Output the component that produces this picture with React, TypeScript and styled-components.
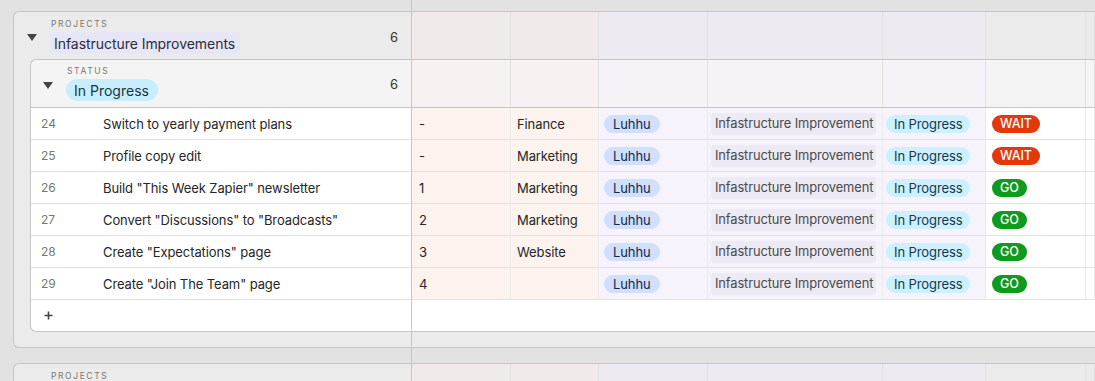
import React from "react";
import styled, { createGlobalStyle, css } from "styled-components";

const BORDER = "#c6c6c6";

const Global = createGlobalStyle`
  html, body { margin: 0; padding: 0; background: #e2e2e2; overflow: hidden; }
  body { font-family: Inter, "Noto Sans", sans-serif; color: #222; }
  * { box-sizing: border-box; }
`;

type Tint = "peach" | "lavender" | "none";
type Level = "outer" | "inner" | "row";

const TINTS: Record<Tint, Record<Level, string>> = {
  peach: { outer: "#f0ebea", inner: "#f7f2f1", row: "#fdf3ee" },
  lavender: { outer: "#edebf1", inner: "#f5f3f8", row: "#f7f3fd" },
  none: { outer: "#ebebeb", inner: "#f4f4f4", row: "#ffffff" },
};

const BASE: Record<"outer" | "inner", string> = { outer: "#ebebeb", inner: "#f4f4f4" };

const COLUMNS: { width: string; tint: Tint }[] = [
  { width: "99px", tint: "peach" },
  { width: "88px", tint: "peach" },
  { width: "109px", tint: "lavender" },
  { width: "175px", tint: "lavender" },
  { width: "103px", tint: "lavender" },
  { width: "100px", tint: "none" },
  { width: "1fr", tint: "none" },
];
const GRID = COLUMNS.map((c) => c.width).join(" ");

const rows = [
  { id: 24, title: "Switch to yearly payment plans", n: "-", team: "Finance", go: false },
  { id: 25, title: "Profile copy edit", n: "-", team: "Marketing", go: false },
  { id: 26, title: 'Build "This Week Zapier" newsletter', n: "1", team: "Marketing", go: true },
  { id: 27, title: 'Convert "Discussions" to "Broadcasts"', n: "2", team: "Marketing", go: true },
  { id: 28, title: 'Create "Expectations" page', n: "3", team: "Website", go: true },
  { id: 29, title: 'Create "Join The Team" page', n: "4", team: "", go: true },
];

/* ---------- layout ---------- */

const Screen = styled.div`
  display: flex;
  width: 1095px;
  height: 381px;
  overflow: hidden;
`;

const Pane = styled.div<{ $left?: boolean }>`
  display: flex;
  flex-direction: column;
  gap: 15px;
  padding-top: 11px;
  ${(p) =>
    p.$left
      ? css`
          width: 412px;
          flex-shrink: 0;
          border-right: 1px solid ${BORDER};
        `
      : css`
          flex: 1;
          min-width: 0;
        `}
`;

const Group = styled.section<{ $left?: boolean; $level: "outer" | "inner" }>`
  flex-shrink: 0;
  background: ${(p) => BASE[p.$level]};
  border-top: 1px solid ${BORDER};
  border-bottom: 1px solid ${BORDER};
  padding-bottom: ${(p) => (p.$level === "outer" ? "15px" : "0")};
  ${(p) =>
    p.$left &&
    css`
      margin-left: ${p.$level === "outer" ? "13px" : "16px"};
      border-left: 1px solid ${BORDER};
      border-radius: 6px 0 0 6px;
    `}
`;

const GroupHeader = styled.div<{ $level: "outer" | "inner" }>`
  display: flex;
  align-items: flex-start;
  padding-left: ${(p) => (p.$level === "outer" ? "13px" : "12px")};
  padding-right: 13px;
  border-bottom: ${(p) => (p.$level === "inner" ? `1px solid ${BORDER}` : "none")};
  height: ${(p) => (p.$level === "inner" ? "48px" : "47px")};
`;

const Toggle = styled.svg<{ $top: number }>`
  width: 10px;
  height: 7px;
  margin-top: ${(p) => p.$top}px;
  flex-shrink: 0;
`;

const LabelStack = styled.div<{ $top: number }>`
  display: flex;
  flex-direction: column;
  align-items: flex-start;
  margin-left: 13px;
  padding-top: ${(p) => p.$top}px;
  flex: 1;
`;

const FieldLabel = styled.div`
  font-size: 8.5px;
  line-height: 11px;
  letter-spacing: 1.6px;
  color: #777;
  padding-left: 1px;
`;

const ProjectChip = styled.span`
  margin-top: 2px;
  height: 22px;
  display: inline-flex;
  align-items: center;
  padding: 0 5px 0 4px;
  border-radius: 3px;
  background: #e6e6f6;
  color: #2c2c3a;
  font-size: 14px;
  letter-spacing: -0.05px;
  white-space: nowrap;
`;

const StatusChip = styled.span`
  margin-top: 2px;
  height: 22px;
  display: inline-flex;
  align-items: center;
  padding: 0 9px 0 8px;
  border-radius: 11px;
  background: #c8eefd;
  color: #163646;
  font-size: 14px;
  white-space: nowrap;
`;

const Count = styled.div<{ $top: number }>`
  font-size: 13px;
  color: #333;
  margin-top: ${(p) => p.$top}px;
`;

/* left rows */

const LeftRow = styled.div<{ $last?: boolean }>`
  display: grid;
  grid-template-columns: 72px 1fr;
  align-items: center;
  height: 32px;
  background: #fff;
  border-bottom: ${(p) => (p.$last ? "none" : "1px solid #e2e2e2")};
  ${(p) =>
    p.$last &&
    css`
      height: 31px;
      border-radius: 0 0 0 6px;
    `}
`;

const RowNumber = styled.div`
  padding-left: 10px;
  font-size: 12px;
  color: #777;
`;

const RowTitle = styled.div`
  font-size: 13px;
  letter-spacing: -0.1px;
  color: #262626;
  white-space: nowrap;
  overflow: hidden;
`;

const AddButton = styled.div`
  padding-left: 13px;
  display: flex;
  align-items: center;
`;

/* right side */

const Strip = styled.div<{ $level: Level }>`
  display: grid;
  grid-template-columns: ${GRID};
  height: ${(p) => (p.$level === "row" ? "32px" : p.$level === "inner" ? "48px" : "47px")};
  border-bottom: ${(p) =>
    p.$level === "row" ? "1px solid #e2e2e2" : p.$level === "inner" ? `1px solid ${BORDER}` : "none"};
`;

const Cell = styled.div<{ $tint: Tint; $level: Level; $pad?: number }>`
  display: flex;
  align-items: center;
  min-width: 0;
  overflow: hidden;
  background: ${(p) => TINTS[p.$tint][p.$level]};
  border-right: 1px solid ${(p) => (p.$level === "row" ? "#ebebeb" : "#e1e1e1")};
  padding-left: ${(p) => p.$pad ?? 0}px;
  font-size: 13px;
  letter-spacing: -0.1px;
  color: #262626;
  white-space: nowrap;
`;

const AddStrip = styled.div`
  height: 31px;
  background: #fff;
`;

const Pill = styled.span<{ $bg: string; $fg: string; $px: number }>`
  display: inline-flex;
  align-items: center;
  height: 18px;
  padding: 0 ${(p) => p.$px}px;
  border-radius: 9px;
  background: ${(p) => p.$bg};
  color: ${(p) => p.$fg};
  font-size: 13px;
  white-space: nowrap;
`;

const LinkChip = styled.span`
  display: flex;
  align-items: center;
  height: 22px;
  flex: 1;
  margin-right: 6px;
  padding-left: 4px;
  border-radius: 3px;
  background: #ebeaf5;
  color: #4a4a4a;
  font-size: 12.9px;
  letter-spacing: -0.12px;
  white-space: nowrap;
`;

const Signal = styled.span<{ $go: boolean }>`
  display: inline-flex;
  align-items: center;
  height: 18px;
  padding: 0 8px;
  border-radius: 9px;
  background: ${(p) => (p.$go ? "#0f9a1e" : "#e2380c")};
  color: #fff;
  font-size: 12.5px;
  font-weight: 500;
`;

/* ---------- pieces ---------- */

const Triangle = ({ top }: { top: number }) => (
  <Toggle $top={top} viewBox="0 0 10 7">
    <polygon points="0,0 10,0 5,7" fill="#444" />
  </Toggle>
);

const PlusIcon = () => (
  <svg width="9" height="9" viewBox="0 0 9 9">
    <path d="M4.5 0.5v8M0.5 4.5h8" stroke="#444" strokeWidth="1.6" />
  </svg>
);

const HeaderStrip = ({ level }: { level: "outer" | "inner" }) => (
  <Strip $level={level}>
    {COLUMNS.map((c, i) => (
      <Cell key={i} $tint={c.tint} $level={level} />
    ))}
  </Strip>
);

const DataStrip = ({ r }: { r: (typeof rows)[number] }) => (
  <Strip $level="row">
    <Cell $tint="peach" $level="row" $pad={7}>
      {r.n}
    </Cell>
    <Cell $tint="peach" $level="row" $pad={6}>
      {r.team}
    </Cell>
    <Cell $tint="lavender" $level="row" $pad={5}>
      <Pill $bg="#cfdffc" $fg="#13284d" $px={9}>
        Luhhu
      </Pill>
    </Cell>
    <Cell $tint="lavender" $level="row" $pad={3}>
      <LinkChip>Infastructure Improvement</LinkChip>
    </Cell>
    <Cell $tint="lavender" $level="row" $pad={3}>
      <Pill $bg="#ccf0fd" $fg="#153849" $px={8}>
        In Progress
      </Pill>
    </Cell>
    <Cell $tint="none" $level="row" $pad={6}>
      <Signal $go={r.go}>{r.go ? "GO" : "WAIT"}</Signal>
    </Cell>
    <Cell $tint="none" $level="row" />
  </Strip>
);

export default function App() {
  return (
    <>
      <Global />
      <Screen>
        <Pane $left>
          <Group $left $level="outer">
            <GroupHeader $level="outer">
              <Triangle top={22} />
              <LabelStack $top={7}>
                <FieldLabel>PROJECTS</FieldLabel>
                <ProjectChip>Infastructure Improvements</ProjectChip>
              </LabelStack>
              <Count $top={17}>6</Count>
            </GroupHeader>
            <Group $left $level="inner">
              <GroupHeader $level="inner">
                <Triangle top={22} />
                <LabelStack $top={6}>
                  <FieldLabel>STATUS</FieldLabel>
                  <StatusChip>In Progress</StatusChip>
                </LabelStack>
                <Count $top={16}>6</Count>
              </GroupHeader>
              {rows.map((r) => (
                <LeftRow key={r.id}>
                  <RowNumber>{r.id}</RowNumber>
                  <RowTitle>{r.title}</RowTitle>
                </LeftRow>
              ))}
              <LeftRow $last>
                <AddButton>
                  <PlusIcon />
                </AddButton>
              </LeftRow>
            </Group>
          </Group>
          <Group $left $level="outer">
            <GroupHeader $level="outer">
              <Triangle top={22} />
              <LabelStack $top={7}>
                <FieldLabel>PROJECTS</FieldLabel>
              </LabelStack>
            </GroupHeader>
          </Group>
        </Pane>
        <Pane>
          <Group $level="outer">
            <HeaderStrip level="outer" />
            <Group $level="inner">
              <HeaderStrip level="inner" />
              {rows.map((r) => (
                <DataStrip key={r.id} r={r} />
              ))}
              <AddStrip />
            </Group>
          </Group>
          <Group $level="outer">
            <HeaderStrip level="outer" />
          </Group>
        </Pane>
      </Screen>
    </>
  );
}
